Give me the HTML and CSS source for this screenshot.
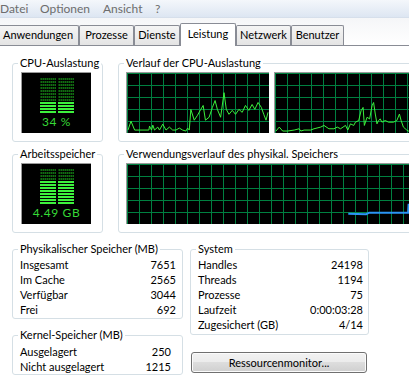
FILE: index.html
```html
<!DOCTYPE html>
<html lang="de">
<head>
    <meta charset="UTF-8">
    <title>Windows Task-Manager</title>
    <link rel="stylesheet" href="styles.css">
</head>
<body>
    <div class="menubar">
        <span class="menu-item m-datei">Datei</span>
        <span class="menu-item m-optionen">Optionen</span>
        <span class="menu-item m-ansicht">Ansicht</span>
        <span class="menu-item">?</span>
    </div>

    <div class="tabstrip">
        <div class="tab t-anw">Anwendungen</div>
        <div class="tab t-proz">Prozesse</div>
        <div class="tab t-dienste">Dienste</div>
        <div class="tab t-leistung active">Leistung</div>
        <div class="tab t-netz">Netzwerk</div>
        <div class="tab t-ben">Benutzer</div>
    </div>

    <div class="panel">
        <div class="charts">
            <fieldset class="group meter-group">
                <legend>CPU-Auslastung</legend>
                <div class="meter">
                    <div class="meter-bars">
                        <div class="bar-col">
                            <div class="dim" style="height:24px"></div>
                            <div class="lit" style="height:12px"></div>
                        </div>
                        <div class="bar-col">
                            <div class="dim" style="height:24px"></div>
                            <div class="lit" style="height:12px"></div>
                        </div>
                    </div>
                    <div class="meter-text">34 %</div>
                </div>
            </fieldset>

            <fieldset class="group history-group">
                <legend>Verlauf der CPU-Auslastung</legend>
                <div class="graphs">
                    <div class="graph cpu-graph">
                        <svg viewBox="0 0 143 61" preserveAspectRatio="none">
                            <polyline class="cpu-line" points="1,58 4,49 7.7,58 13,58 22,58 22.7,54 24.7,58 26,53 27.7,58 31,55 32.7,58 36,52 39.3,58 42.7,55 46,58 49.3,58 52.7,56 56,58 59.3,59 61,56 62.7,58 64.3,37 67.7,48 71,43 74.3,37 76.7,33 79,48 82.7,45 86,35 88.7,28 91,37 94.3,45 97.7,20 100,37 102.7,42 106,38 109.3,42 112.7,37 116,40 119.3,33 122.7,38 126,32 128.7,37 132,30 135.3,35 137.7,42 140,48 142,40"/>
                        </svg>
                    </div>
                    <div class="graph cpu-graph">
                        <svg viewBox="0 0 143 61" preserveAspectRatio="none">
                            <polyline class="cpu-line" points="1,59 4.3,55 7.7,59 12.7,59 19.3,58 24.3,56.7 26,59 29.3,58 36,58 39.3,56.7 46,55 49.3,53.3 54.3,56.7 59.3,56.7 62.7,55 66,56.7 71,53.3 73.3,58 76,51.7 79.3,53.3 81,50 84.3,48.3 86.7,38.3 88.7,35 90,53.3 92.7,45 95.3,46.7 97.7,33.3 99.3,30 101,41.7 102.7,51.7 104.3,48.3 106,46.7 107.7,50 111,48.3 114.3,50 119.3,50 122.7,48.3 125.3,41.7 127,48.3 129.3,55 132.7,58 134.3,59 142,59"/>
                        </svg>
                    </div>
                </div>
            </fieldset>

            <fieldset class="group meter-group">
                <legend>Arbeitsspeicher</legend>
                <div class="meter">
                    <div class="meter-bars">
                        <div class="bar-col">
                            <div class="dim" style="height:12px"></div>
                            <div class="lit" style="height:24px"></div>
                        </div>
                        <div class="bar-col">
                            <div class="dim" style="height:12px"></div>
                            <div class="lit" style="height:24px"></div>
                        </div>
                    </div>
                    <div class="meter-text">4.49 GB</div>
                </div>
            </fieldset>

            <fieldset class="group history-group">
                <legend>Verwendungsverlauf des physikal. Speichers</legend>
                <div class="graph mem-graph">
                    <svg viewBox="0 0 300 61" preserveAspectRatio="none">
                        <polyline class="mem-line" points="222,50.5 240,51 243,49.5 282,49.5 282.5,41.5 300,41.5"/>
                    </svg>
                </div>
            </fieldset>
        </div>

        <div class="stats">
            <div class="stats-col">
                <fieldset class="group phys-group">
                    <legend>Physikalischer Speicher (MB)</legend>
                    <div class="row"><span>Insgesamt</span><span>7651</span></div>
                    <div class="row"><span>Im Cache</span><span>2565</span></div>
                    <div class="row"><span>Verfügbar</span><span>3044</span></div>
                    <div class="row"><span>Frei</span><span>692</span></div>
                </fieldset>

                <fieldset class="group kernel-group">
                    <legend>Kernel-Speicher (MB)</legend>
                    <div class="row"><span>Ausgelagert</span><span>250</span></div>
                    <div class="row"><span>Nicht ausgelagert</span><span>1215</span></div>
                </fieldset>
            </div>

            <div class="stats-col">
                <fieldset class="group system-group">
                    <legend>System</legend>
                    <div class="row"><span>Handles</span><span>24198</span></div>
                    <div class="row"><span>Threads</span><span>1194</span></div>
                    <div class="row"><span>Prozesse</span><span>75</span></div>
                    <div class="row"><span>Laufzeit</span><span>0:00:03:28</span></div>
                    <div class="row"><span>Zugesichert (GB)</span><span>4/14</span></div>
                </fieldset>

                <button class="btn">Ressourcenmonitor...</button>
            </div>
        </div>
    </div>
</body>
</html>
```

FILE: styles.css
```css
html, body {
    margin: 0;
    padding: 0;
    overflow: hidden;
}

body {
    width: 409px;
    height: 387px;
    background-color: #fff;
    font-family: Lato, "Liberation Sans", sans-serif;
    font-size: 11px;
    color: #000;
}

/* menu */
.menubar {
    display: flex;
    align-items: center;
    height: 17px;
    border-bottom: 1px solid #d6dfeb;
    background: linear-gradient(to bottom, #f4f7fb, #dde6f2);
    font-size: 12px;
}

.menu-item {
    color: #6d6d6d;
}

.m-datei { width: 40px; }
.m-optionen { width: 63px; }
.m-ansicht { width: 52px; }

/* tabs */
.tabstrip {
    display: flex;
    align-items: flex-end;
    height: 27px;
    margin-left: -3px;
    border-bottom: 1px solid #898c95;
    background: linear-gradient(to bottom, #f5f6f8, #fff);
}

.tab {
    box-sizing: border-box;
    height: 20px;
    line-height: 18px;
    text-align: center;
    border: 1px solid #898c95;
    border-bottom: none;
    border-radius: 2px 2px 0 0;
    background: linear-gradient(to bottom, #f5f5f5, #e4e4e4);
}

.tab.active {
    position: relative;
    height: 23px;
    margin-bottom: -1px;
    line-height: 19px;
    background: #fff;
}

.t-anw { width: 82px; }
.t-proz { width: 55px; }
.t-dienste { width: 46px; }
.t-leistung { width: 56px; }
.t-netz { width: 55px; }
.t-ben { width: 53px; }

/* panel */
.panel {
    padding: 10px 0 0 12px;
}

.group {
    box-sizing: border-box;
    margin: 0;
    min-width: 0;
    padding: 0 6px 0 7px;
    border: 1px solid #d5dfe5;
    border-radius: 3px;
}

.group legend {
    margin-left: -2px;
    padding: 0 2px;
    line-height: 14px;
    white-space: nowrap;
}

.charts {
    display: grid;
    grid-template-columns: 91px 320px;
    column-gap: 15px;
    row-gap: 5px;
}

.meter-group,
.history-group {
    height: 86px;
    padding-top: 2px;
}

.meter {
    box-sizing: border-box;
    width: 70px;
    height: 61px;
    margin-left: 1px;
    padding-top: 4px;
    background-color: #000;
    border-top: 1px solid #9a9a9a;
    border-left: 1px solid #9a9a9a;
}

.meter-bars {
    display: flex;
    justify-content: center;
    gap: 2px;
}

.bar-col {
    width: 16px;
}

.dim {
    background:
        repeating-linear-gradient(to right, rgba(0, 0, 0, 0.45) 0 1px, transparent 1px 2px),
        repeating-linear-gradient(to bottom, #000 0 1px, #116b11 1px 3px);
}

.lit {
    background: repeating-linear-gradient(to bottom, #000 0 1px, #3df23d 1px 3px);
}

.meter-text {
    margin-top: 2px;
    line-height: 14px;
    text-align: center;
    font-size: 12px;
    letter-spacing: 0.6px;
    color: #36d936;
}

.graphs {
    display: flex;
    gap: 5px;
}

.graph {
    box-sizing: border-box;
    height: 61px;
    background-color: #000;
    background-image:
        linear-gradient(to bottom, #008040 1px, transparent 1px),
        linear-gradient(to right, #008040 1px, transparent 1px);
    background-size: 12px 12px;
    border-top: 1px solid #9a9a9a;
    border-left: 1px solid #9a9a9a;
}

.graph svg {
    display: block;
    width: 100%;
    height: 100%;
}

.cpu-graph { width: 143px; }
.mem-graph { width: 300px; }

.cpu-line {
    fill: none;
    stroke: #3df23d;
    stroke-width: 1;
}

.mem-line {
    fill: none;
    stroke: #2b95f5;
    stroke-width: 2;
}

/* stats */
.stats {
    display: grid;
    grid-template-columns: 171px 179px;
    column-gap: 7px;
    margin-top: 9px;
}

.stats-col {
    display: flex;
    flex-direction: column;
}

.row {
    display: flex;
    justify-content: space-between;
    line-height: 15px;
}

.phys-group {
    padding-top: 1px;
    padding-bottom: 1px;
}

.kernel-group {
    margin-top: 9px;
    padding-top: 2px;
    padding-right: 11px;
}

.system-group {
    padding-top: 1px;
    padding-right: 5px;
    padding-bottom: 2px;
}

.btn {
    width: 176px;
    height: 21px;
    margin: 17px 0 0 1px;
    padding: 0;
    border: 1px solid #707070;
    border-radius: 3px;
    background: linear-gradient(to bottom, #f2f2f2 0%, #ebebeb 50%, #dddddd 50%, #cfcfcf 100%);
    box-shadow: inset 0 0 0 1px #fbfbfb;
    font: inherit;
    color: #000;
}
```
